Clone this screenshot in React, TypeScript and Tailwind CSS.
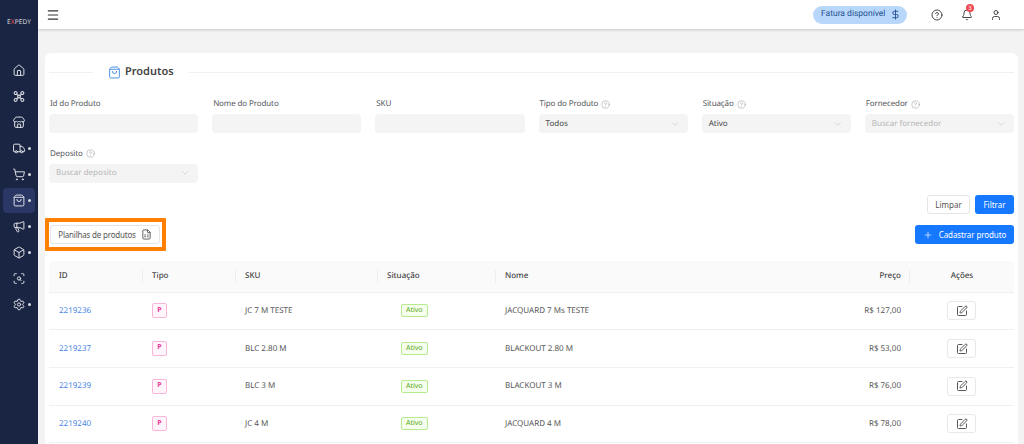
import {
  Home,
  Store,
  Truck,
  ShoppingCart,
  ShoppingBag,
  Megaphone,
  Box,
  ScanSearch,
  Settings,
  Menu,
  DollarSign,
  CircleHelp,
  Bell,
  User,
  ChevronDown,
  FileSpreadsheet,
  Plus,
  SquarePen,
} from 'lucide-react';

function HubIcon({ size = 14, className = '' }: { size?: number; strokeWidth?: number; className?: string }) {
  return (
    <svg width={size} height={size} viewBox="0 0 24 24" fill="none" stroke="currentColor" strokeWidth="2" className={className}>
      <circle cx="12" cy="12" r="2.5" />
      <path d="M10 10 8 8M14 10l2-2M10 14l-2 2M14 14l2 2" />
      <path d="M4 3.500c2.500-1.500 5 .5 4.500 2.500S6 9 4.500 8 2.500 4.500 4 3.500Z" />
      <path d="M20 3.500c-2.500-1.500-5 .5-4.500 2.500s2.500 3 4 2 2-3.500.5-4.500Z" />
      <path d="M4 20.500c2.500 1.500 5-.5 4.500-2.500S6 15 4.500 16 2.500 19.500 4 20.500Z" />
      <path d="M20 20.500c-2.500 1.500-5-.5-4.500-2.500s2.500-3 4-2 2 3.500.5 4.500Z" />
    </svg>
  );
}

const navItems = [
  { icon: Home, dot: false },
  { icon: HubIcon, dot: false },
  { icon: Store, dot: false },
  { icon: Truck, dot: true },
  { icon: ShoppingCart, dot: true },
  { icon: ShoppingBag, dot: true, active: true },
  { icon: Megaphone, dot: true },
  { icon: Box, dot: true },
  { icon: ScanSearch, dot: false },
  { icon: Settings, dot: true },
];

const rows = [
  { id: '2219236', sku: 'JC 7 M TESTE', nome: 'JACQUARD 7 Ms TESTE', preco: 'R$ 127,00' },
  { id: '2219237', sku: 'BLC 2.80 M', nome: 'BLACKOUT 2.80 M', preco: 'R$ 53,00' },
  { id: '2219239', sku: 'BLC 3 M', nome: 'BLACKOUT 3 M', preco: 'R$ 76,00' },
  { id: '2219240', sku: 'JC 4 M', nome: 'JACQUARD 4 M', preco: 'R$ 78,00' },
];

function Sidebar() {
  return (
    <aside className="w-[38px] shrink-0 bg-[#1a2544] flex flex-col items-center">
      <div className="mt-[17px] text-[6.5px] tracking-[0.1px] text-[#d5d7de] leading-[10px]">
        E<span className="text-[#e0524a]">X</span>PEDY
      </div>
      <nav className="mt-[31px] w-full flex flex-col gap-px">
        {navItems.map((item, i) => {
          const Icon = item.icon;
          return (
            <div key={i} className="h-[25px] relative flex items-center justify-center">
              {item.active && <div className="absolute left-[3px] top-0 w-[32px] h-[25px] rounded bg-[#2a3663]" />}
              <Icon size={13} strokeWidth={1.8} className="relative text-[#e3e5ea] -translate-x-[0.5px]" />
              {item.dot && <span className="absolute left-[28px] top-[11px] w-[3px] h-[3px] rounded-full bg-[#d8dae0]" />}
            </div>
          );
        })}
      </nav>
    </aside>
  );
}

function TopBar() {
  return (
    <header className="h-[29px] shrink-0 bg-white shadow-[0_1px_3px_rgba(0,0,0,0.18)] flex items-center relative">
      <Menu size={14} strokeWidth={2} className="ml-[8px] text-[#333]" />
      <div className="ml-auto flex items-center">
        <div className="h-[18px] w-[94px] rounded-full bg-[#b9d7fb] flex items-center pl-[8px] text-[8.5px] text-[#24508f] font-['Roboto',sans-serif]">
          <span>Fatura disponível</span>
          <DollarSign size={11} strokeWidth={2} className="ml-[5px]" />
        </div>
        <CircleHelp size={12} strokeWidth={1.8} className="ml-[24px] text-[#333]" />
        <div className="relative ml-[18px]">
          <Bell size={12} strokeWidth={1.8} className="text-[#333]" />
          <span className="absolute -top-[5px] left-[5px] w-[8px] h-[8px] rounded-full bg-[#f2474f] text-white text-[6px] leading-[8px] text-center">3</span>
        </div>
        <User size={12} strokeWidth={1.8} className="ml-[17px] mr-[22px] text-[#333]" />
      </div>
    </header>
  );
}

function Field({ label, help, value, placeholder, select, disabled }: { label: string; help?: boolean; value?: string; placeholder?: string; select?: boolean; disabled?: boolean }) {
  return (
    <div>
      <div className="h-[14px] pl-px flex items-center text-[8px] tracking-[-0.12px] text-[#55585c] leading-none">
        {label}
        {help && <CircleHelp size={9} strokeWidth={1} className="ml-[3px] text-[#777]" />}
      </div>
      <div className={`mt-[3px] h-[19px] rounded bg-[#f4f4f4] flex items-center justify-between pl-[7px] pr-[8px] text-[8px] ${disabled ? 'text-[#b4b4b4]' : 'text-[#444]'}`}>
        <span>{value || placeholder}</span>
        {select && <ChevronDown size={10} strokeWidth={1} className="text-[#aaa]" />}
      </div>
    </div>
  );
}

function TipoBadge() {
  return (
    <span className="w-[15px] h-[15px] rounded-[2px] border-[1.5px] border-[#f9b6d8] bg-[#fff5fa] flex items-center justify-center text-[7px] font-bold text-[#e83e9b]">
      P
    </span>
  );
}

const columns = 'grid grid-cols-[103px_93px_142px_118px_1fr_52px_113px] items-center';

function ProductsTable() {
  return (
    <div className="mt-[10px] text-[8px]">
      <div className={`${columns} h-[31.500px] bg-[#fafafa] rounded-t border-b border-[#f0f0f0] font-medium text-[#444]`}>
        <div className="pl-[10px]">ID</div>
        <div className="border-l border-[#eee] -ml-[10px] pl-[9px] h-[13px] flex items-center">Tipo</div>
        <div className="border-l border-[#eee] -ml-[10px] pl-[9px] h-[13px] flex items-center">SKU</div>
        <div className="border-l border-[#eee] -ml-[10px] pl-[9px] h-[13px] flex items-center">Situação</div>
        <div className="border-l border-[#eee] -ml-[10px] pl-[9px] h-[13px] flex items-center">Nome</div>
        <div className="text-right pr-0">Preço</div>
        <div className="ml-[8px] border-l border-[#eee] h-[13px] flex items-center justify-center">Ações</div>
      </div>
      {rows.map((row) => (
        <div key={row.id} className={`${columns} h-[37.700px] border-b border-[#f0f0f0] text-[#555]`}>
          <div className="pl-[10px] text-[#4a86e8]">{row.id}</div>
          <div><TipoBadge /></div>
          <div>{row.sku}</div>
          <div>
            <span className="ml-[14px] inline-block h-[13px] px-[4px] rounded-[2px] border border-[#b7eb8f] bg-[#f6ffed] text-[#52a514] text-[7px] leading-[11px]">Ativo</span>
          </div>
          <div>{row.nome}</div>
          <div className="text-right whitespace-nowrap">{row.preco}</div>
          <div className="ml-[8px] flex justify-center">
            <span className="w-[29px] h-[19px] rounded-[3px] border border-[#e8e8e8] bg-white flex items-center justify-center">
              <SquarePen size={12} strokeWidth={1.8} className="text-[#444]" />
            </span>
          </div>
        </div>
      ))}
    </div>
  );
}

export default function App() {
  return (
    <div className="w-[1024px] h-[444px] overflow-hidden flex bg-[#f3f3f3] font-['Noto_Sans',sans-serif] [text-rendering:geometricPrecision]">
      <Sidebar />
      <div className="flex-1 min-w-0 flex flex-col">
        <TopBar />
        <main className="flex-1 min-h-0 pt-[24px] pl-[7px] pr-[6px]">
          <div className="bg-white rounded-t-md pt-[9px] px-[4px] h-full">
            <div className="flex items-center h-[20px]">
              <div className="w-[44px] h-px bg-[#f0f0f0]" />
              <ShoppingBag size={13} strokeWidth={1.8} className="ml-[15px] text-[#4a90e2]" />
              <span className="ml-[4px] text-[11px] font-semibold text-[#444]">Produtos</span>
              <div className="ml-[15px] flex-1 h-px bg-[#f0f0f0]" />
            </div>
            <div className="mt-[15px] grid grid-cols-6 gap-x-[14px] gap-y-[13.500px]">
              <Field label="Id do Produto" />
              <Field label="Nome do Produto" />
              <Field label="SKU" />
              <Field label="Tipo do Produto" help value="Todos" select />
              <Field label="Situação" help value="Ativo" select />
              <Field label="Fornecedor" help placeholder="Buscar fornecedor" select disabled />
              <Field label="Deposito" help placeholder="Buscar deposito" select disabled />
            </div>
            <div className="mt-[12.500px] flex justify-end gap-[5px] text-[8px]">
              <button className="w-[43px] h-[19px] rounded-[3px] border border-[#e5e5e5] bg-white text-[#555]">Limpar</button>
              <button className="w-[39px] h-[19px] rounded-[3px] bg-[#1677ff] text-white">Filtrar</button>
            </div>
            <div className="mt-[4px] flex items-center justify-between h-[33px] -ml-[4px]">
              <div className="w-[121px] h-[33px] rounded-[1px] border-[4px] border-[#ff8000] flex items-center pl-px">
                <button className="w-[110px] h-[19px] rounded-[3px] border border-[#e5e5e5] bg-white flex items-center justify-center gap-[5px] text-[8px] tracking-[-0.2px] text-[#555]">
                  Planilhas de produtos
                  <FileSpreadsheet size={11} strokeWidth={1.8} className="text-[#444]" />
                </button>
              </div>
              <button className="w-[99px] h-[19px] rounded-[3px] bg-[#1677ff] text-white flex items-center justify-center gap-[6px] text-[8px] tracking-[-0.1px]">
                <Plus size={10} strokeWidth={1.6} />
                Cadastrar produto
              </button>
            </div>
            <ProductsTable />
          </div>
        </main>
      </div>
    </div>
  );
}
